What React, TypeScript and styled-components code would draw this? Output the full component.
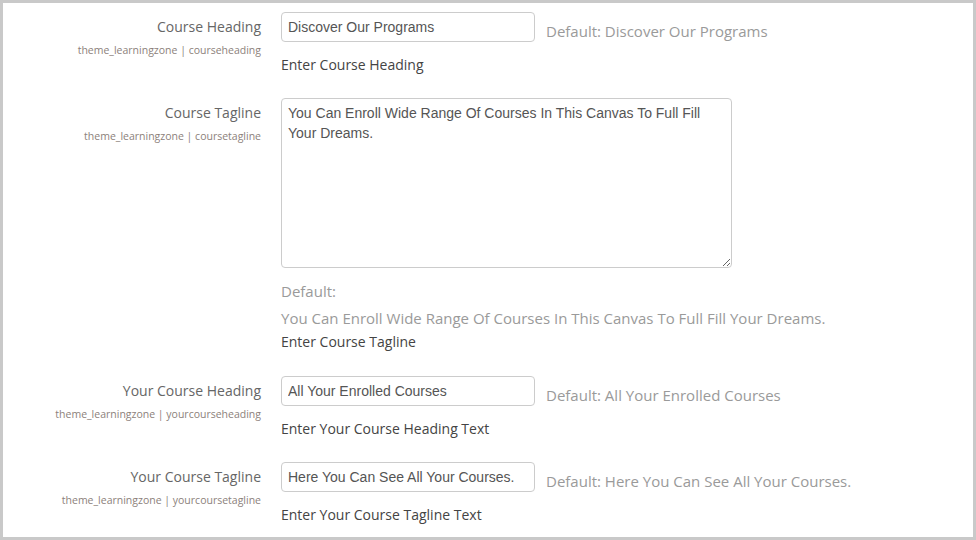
import React from "react";
import styled, { createGlobalStyle } from "styled-components";

const Global = createGlobalStyle`
  html, body { margin: 0; padding: 0; background: #ffffff; }
  * { box-sizing: border-box; }
`;

const Frame = styled.div`
  width: 976px;
  height: 540px;
  border: 3px solid #c9c9c9;
  background: #ffffff;
  padding-top: 9px;
  overflow: hidden;
  font-family: "Open Sans", "Noto Sans", sans-serif;
`;

const Setting = styled.div<{ $tall?: boolean }>`
  display: grid;
  grid-template-columns: 258px 1fr;
  column-gap: 20px;
  margin-bottom: ${(p) => (p.$tall ? 24 : 23)}px;
`;

const LabelCol = styled.div`
  display: flex;
  flex-direction: column;
  align-items: flex-end;
  text-align: right;
  padding-top: 5px;
`;

const Label = styled.div`
  font-size: 14px;
  line-height: 20px;
  color: #666666;
`;

const Key = styled.div`
  margin-top: 5px;
  font-size: 10.5px;
  line-height: 16px;
  color: #8c817b;
`;

const FieldCol = styled.div`
  display: flex;
  flex-direction: column;
  align-items: flex-start;
`;

const FieldLine = styled.div`
  display: flex;
  align-items: flex-start;
  gap: 11px;
`;

const TextInput = styled.input`
  width: 254px;
  height: 30px;
  margin: 0;
  padding: 0 6px;
  border: 1px solid #cccccc;
  border-radius: 4px;
  font-family: "Liberation Sans", Arial, sans-serif;
  font-size: 14px;
  color: #555555;
  background: #ffffff;
  outline: none;
`;

const TextArea = styled.textarea`
  display: block;
  width: 451px;
  height: 170px;
  margin: 0;
  padding: 4px 6px;
  border: 1px solid #cccccc;
  border-radius: 4px;
  font-family: "Liberation Sans", Arial, sans-serif;
  font-size: 14px;
  line-height: 20px;
  color: #555555;
  background: #ffffff;
  outline: none;
  resize: both;
`;

const DefaultInline = styled.div`
  padding-top: 9px;
  font-size: 15px;
  line-height: 20px;
  color: #9a9a9a;
  white-space: nowrap;
`;

const DefaultBlock = styled.div`
  margin-top: 13px;
  font-size: 15px;
  line-height: 20px;
  color: #9a9a9a;
`;

const DefaultValue = styled.div`
  margin-top: 7px;
`;

const Description = styled.div<{ $gap: number }>`
  margin-top: ${(p) => p.$gap}px;
  font-size: 14px;
  line-height: 20px;
  color: #444444;
`;

type Item = {
  label: string;
  key: string;
  value: string;
  desc: string;
  multiline?: boolean;
};

const items: Item[] = [
  {
    label: "Course Heading",
    key: "theme_learningzone | courseheading",
    value: "Discover Our Programs",
    desc: "Enter Course Heading",
  },
  {
    label: "Course Tagline",
    key: "theme_learningzone | coursetagline",
    value: "You Can Enroll Wide Range Of Courses In This Canvas To Full Fill Your Dreams.",
    desc: "Enter Course Tagline",
    multiline: true,
  },
  {
    label: "Your Course Heading",
    key: "theme_learningzone | yourcourseheading",
    value: "All Your Enrolled Courses",
    desc: "Enter Your Course Heading Text",
  },
  {
    label: "Your Course Tagline",
    key: "theme_learningzone | yourcoursetagline",
    value: "Here You Can See All Your Courses.",
    desc: "Enter Your Course Tagline Text",
  },
];

export default function App() {
  return (
    <>
      <Global />
      <Frame>
        {items.map((it) => (
          <Setting key={it.key} $tall={it.multiline}>
            <LabelCol>
              <Label>{it.label}</Label>
              <Key>{it.key}</Key>
            </LabelCol>
            <FieldCol>
              {it.multiline ? (
                <>
                  <TextArea defaultValue={it.value} spellCheck={false} />
                  <DefaultBlock>
                    Default:
                    <DefaultValue>{it.value}</DefaultValue>
                  </DefaultBlock>
                  <Description $gap={4}>{it.desc}</Description>
                </>
              ) : (
                <>
                  <FieldLine>
                    <TextInput defaultValue={it.value} spellCheck={false} />
                    <DefaultInline>Default: {it.value}</DefaultInline>
                  </FieldLine>
                  <Description $gap={13}>{it.desc}</Description>
                </>
              )}
            </FieldCol>
          </Setting>
        ))}
      </Frame>
    </>
  );
}
